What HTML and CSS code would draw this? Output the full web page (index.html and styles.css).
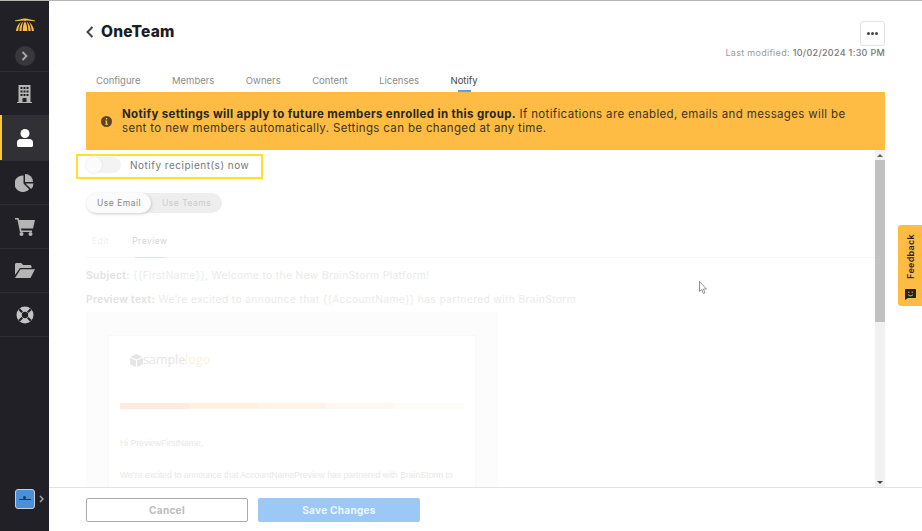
FILE: index.html
```html
<!DOCTYPE html>
<html lang="en">
<head>
  <meta charset="UTF-8" />
  <title>OneTeam - Notify</title>
  <link rel="stylesheet" href="styles.css">
</head>
<body>
  <nav class="sidebar">
    <div class="brand">
      <svg width="20" height="14" viewBox="0 0 20 14"><path fill="#febc45" d="M0 2.400 9 .6h2l9 1.800v.9L11.500 2.600 10 3 8.500 2.600 0 3.300z"/><path fill="#febc45" d="M4.300 13C4.500 8.500 6 5 8.500 3.500 7.200 6 6.600 9.500 6.600 13zM7.700 13C7.800 9 8.400 5.500 10 3.500c1.600 2 2.200 5.500 2.300 9.500zM13.400 13c0-3.500-.6-7-1.900-9.500 2.500 1.500 4 5 4.200 9.500zM1 13c.3-3.500 2-6.800 5-9C4.500 6.500 3.400 10 3.200 13zM16.800 13c-.2-3-1.300-6.500-2.800-9 3 2.200 4.700 5.500 5 9z"/></svg>
      <button class="expand"><svg width="7" height="10" viewBox="0 0 7 10"><path d="M1.500 1 5.500 5 1.500 9" fill="none" stroke="#aaa" stroke-width="1.800"/></svg></button>
    </div>
    <a class="nav-item">
      <svg width="15" height="18" viewBox="0 0 15 18"><path fill="#b5b5b5" fill-rule="evenodd" d="M1.500 0h12v17h-12zM3.500 2v2h2V2zm3 0v2h2V2zm3 0v2h2V2zM3.500 5.500v2h2v-2zm3 0v2h2v-2zm3 0v2h2v-2zM3.500 9v2h2V9zm3 0v2h2V9zm3 0v2h2V9zM5.500 13v4h4v-4z"/><path fill="#b5b5b5" d="M0 17h15v1H0z"/></svg>
    </a>
    <a class="nav-item active">
      <svg width="16" height="18" viewBox="0 0 16 18"><circle cx="8" cy="4.500" r="4.500" fill="#fff"/><path fill="#fff" d="M3.500 10h9c2 0 3.500 1.500 3.500 3.500v3c0 .8-.7 1.500-1.500 1.500h-13C.7 18 0 17.300 0 16.500v-3C0 11.500 1.500 10 3.500 10z"/></svg>
    </a>
    <a class="nav-item">
      <svg width="19" height="18" viewBox="0 0 19 18"><path fill="#b5b5b5" d="M8.500 1.500v8l5.600 5.700A8.300 8.300 0 1 1 8.500 1.500z"/><path fill="#b5b5b5" d="M10 0a8 8 0 0 1 8 8h-8z"/><path fill="#b5b5b5" d="M10.500 9.500h8a8 8 0 0 1-2.400 5.600z"/></svg>
    </a>
    <a class="nav-item">
      <svg width="20" height="18" viewBox="0 0 20 18"><path fill="#b5b5b5" d="M0 0h3.600l.5 2H20l-2 8.500H6l.4 2H17v1.500H5L2.400 1.500H0z"/><circle cx="6.500" cy="16" r="2" fill="#b5b5b5"/><circle cx="15.500" cy="16" r="2" fill="#b5b5b5"/></svg>
    </a>
    <a class="nav-item">
      <svg width="20" height="15" viewBox="0 0 20 15"><path fill="#b5b5b5" d="M0 1.500C0 .7.700 0 1.500 0h4.700l2 2H15c.8 0 1.500.7 1.500 1.500V5H5L0 12z"/><path fill="#b5b5b5" d="M5.500 6.200H20L15.500 15H0z"/></svg>
    </a>
    <a class="nav-item">
      <svg width="18" height="18" viewBox="0 0 18 18"><circle cx="9" cy="9" r="8.500" fill="#c4c4c4"/><circle cx="9" cy="9" r="3.200" fill="#212026"/><path stroke="#212026" stroke-width="2.200" d="M3.200 3.200l3 3M14.800 3.200l-3 3M3.200 14.800l3-3M14.800 14.800l-3-3"/></svg>
    </a>
    <div class="account">
      <span class="account-logo"><b></b><i></i></span>
      <svg width="5" height="8" viewBox="0 0 5 8"><path d="M1 1 4 4 1 7" fill="none" stroke="#aaa" stroke-width="1.400"/></svg>
    </div>
  </nav>

  <div class="main">
    <div class="page">
      <header class="page-head">
        <div class="title-row">
          <svg width="8" height="12" viewBox="0 0 8 12"><path d="M6.500 1 1.500 6l5 5" fill="none" stroke="#444" stroke-width="2"/></svg>
          <h1>OneTeam</h1>
        </div>
        <div class="head-right">
          <button class="more"><i></i><i></i><i></i></button>
          <p class="modified">Last modified: <b>10/02/2024 1:30 PM</b></p>
        </div>
      </header>

      <ul class="tabs">
        <li>Configure</li>
        <li>Members</li>
        <li>Owners</li>
        <li>Content</li>
        <li>Licenses</li>
        <li class="current">Notify</li>
      </ul>

      <div class="banner">
        <svg width="11" height="11" viewBox="0 0 11 11"><circle cx="5.500" cy="5.500" r="5.500" fill="#5a4520"/><path fill="#febc45" d="M4.800 2h1.400v1.400H4.800zM4.300 4.500h1.900v3.200h.6V9H4.300V7.700h.5V5.700h-.5z"/></svg>
        <p><b>Notify settings will apply to future members enrolled in this group.</b> If notifications are enabled, emails and messages will be sent to new members automatically. Settings can be changed at any time.</p>
      </div>

      <div class="scroller">
        <div class="scroll-body">
          <div class="toggle-row">
            <span class="toggle"><i></i></span>
            <span>Notify recipient(s) now</span>
          </div>

          <div class="segment">
            <span class="segment-on">Use Email</span>
            <span>Use Teams</span>
          </div>

          <div class="faded">
            <div class="sub-tabs">
              <span class="sub-off">Edit</span>
              <span class="sub-on">Preview</span>
            </div>
            <p class="meta"><b>Subject:</b> {{FirstName}}, Welcome to the New BrainStorm Platform!</p>
            <p class="meta"><b>Preview text:</b> We’re excited to announce that {{AccountName}} has partnered with BrainStorm</p>
            <div class="mail">
              <div class="mail-card">
                <div class="mail-logo">
                  <svg width="13" height="13" viewBox="0 0 14 14"><path fill="#999" d="M7 0l6.500 3L7 6 .5 3zM0 4l6.500 3v7L0 11zM14 4v7l-6.500 3V7z"/></svg>
                  <span>sample<em>logo</em></span>
                </div>
                <div class="mail-bar"><i></i><i></i><i></i><i></i><i></i></div>
                <p>Hi PreviewFirstName,</p>
                <p>We’re excited to announce that AccountNamePreview has partnered with BrainStorm to</p>
              </div>
            </div>
          </div>
        </div>
        <div class="scrollbar">
          <span class="arrow-up"></span>
          <div class="track"><div class="thumb"></div></div>
          <span class="arrow-down"></span>
        </div>
      </div>
    </div>

    <footer class="actions">
      <button class="btn-cancel">Cancel</button>
      <button class="btn-save">Save Changes</button>
    </footer>
  </div>

  <div class="feedback">
    <span>Feedback</span>
    <svg width="11" height="11" viewBox="0 0 11 11"><path fill="#222" d="M1 0h9c.6 0 1 .4 1 1v7c0 .6-.4 1-1 1H3L0 11V1c0-.6.4-1 1-1z"/><path d="M3.800 2.500v1.500M7.200 2.500v1.500M3 5.500c1 1.800 4 1.800 5 0" stroke="#febc45" stroke-width=".9" fill="none"/></svg>
  </div>

  <svg class="cursor" width="9" height="13" viewBox="0 0 9 13"><path d="M.5.5v10l2.300-2 1.500 4 1.700-.7-1.600-3.800h3.100z" fill="#fff" stroke="#777" stroke-width=".8"/></svg>
</body>
</html>
```

FILE: styles.css
```css
* {
  box-sizing: border-box;
}
html, body {
  height: 100%;
}
body {
  margin: 0;
  display: flex;
  height: 531px;
  overflow: hidden;
  font-family: 'Inter', 'Open Sans', sans-serif;
  color: #333;
  background-color: #fff;
  border-top: 1px solid #b9b4b4;
}
.sidebar {
  width: 49px;
  flex: none;
  display: flex;
  flex-direction: column;
  background-color: #212026;
}
.brand {
  height: 70px;
  flex: none;
  display: flex;
  flex-direction: column;
  align-items: center;
  padding-top: 17px;
  gap: 14px;
}
.expand {
  width: 20px;
  height: 20px;
  padding: 0;
  border: none;
  border-radius: 50%;
  background-color: #38373c;
  display: flex;
  align-items: center;
  justify-content: center;
}
.nav-item {
  height: 44px;
  flex: none;
  display: flex;
  align-items: center;
  justify-content: center;
  border-top: 1px solid #2e2d33;
}
.nav-item:last-of-type {
  border-bottom: 1px solid #2e2d33;
  height: 45px;
}
.nav-item.active {
  height: 45px;
  background-color: #303035;
  border-top: none;
  border-left: 2px solid #fdc92f;
  padding-right: 2px;
}
.account {
  margin-top: auto;
  height: 45px;
  flex: none;
  display: flex;
  align-items: flex-start;
  padding: 3px 0 0 15px;
  gap: 4px;
}
.account svg {
  margin-top: 6px;
}
.account-logo {
  width: 20px;
  height: 20px;
  border: 1px solid #ccc;
  border-radius: 3px;
  background-color: #4a90d9;
  position: relative;
  display: block;
}
.account-logo i {
  position: absolute;
  left: 3px;
  right: 3px;
  top: 9px;
  height: 1px;
  background-color: #1d3a5c;
}
.account-logo b {
  position: absolute;
  left: 7px;
  top: 6px;
  width: 3px;
  height: 3px;
  border-radius: 50%;
  background-color: #1d3a5c;
}
.main {
  flex: 1;
  min-width: 0;
  display: flex;
  flex-direction: column;
}
.page {
  flex: 1;
  min-height: 0;
  padding: 0 37px;
  display: flex;
  flex-direction: column;
}
.page-head {
  height: 67px;
  flex: none;
  display: flex;
  justify-content: space-between;
}
.title-row {
  display: flex;
  align-items: center;
  gap: 7px;
  height: 61px;
}
.title-row h1 {
  margin: 0;
  font-size: 15.500px;
  font-weight: 800;
  letter-spacing: .2px;
  color: #1c1c22;
}
.head-right {
  display: flex;
  flex-direction: column;
  align-items: flex-end;
  padding-top: 20px;
}
.more {
  width: 25px;
  height: 25px;
  padding: 0;
  border: 1px solid #e3e3e3;
  border-radius: 3px;
  background-color: #fff;
  display: flex;
  align-items: center;
  justify-content: center;
  gap: 1px;
}
.more i {
  width: 3px;
  height: 3px;
  border-radius: 50%;
  background-color: #444;
}
.modified {
  margin: 1px 0 0;
  font-size: 9px;
  letter-spacing: .3px;
  color: #999;
}
.modified b {
  font-weight: 500;
  color: #777;
}
.tabs {
  height: 24px;
  flex: none;
  margin: 0;
  padding: 0 10px;
  list-style: none;
  display: flex;
  gap: 31.500px;
  font-size: 9.500px;
  color: #8b8b8b;
}
.tabs li {
  padding-top: 7px;
  position: relative;
}
.tabs .current {
  color: #444;
}
.tabs .current::after {
  content: '';
  position: absolute;
  left: 7px;
  right: 7px;
  bottom: 0;
  height: 2px;
  background-color: #5aa0e6;
}
.banner {
  height: 58px;
  flex: none;
  display: flex;
  align-items: center;
  gap: 10px;
  padding: 0 36px 0 15px;
  background-color: #febc45;
  color: #3d3424;
}
.banner svg {
  flex: none;
}
.banner p {
  margin: 0;
  font-size: 11.500px;
  line-height: 14.500px;
  letter-spacing: .35px;
}
.banner b {
  font-weight: 700;
  color: #2a2620;
}
.scroller {
  flex: 1;
  min-height: 0;
  margin-left: -10px;
  display: flex;
  overflow: hidden;
}
.scroll-body {
  flex: 1;
  min-width: 0;
  padding-left: 10px;
  overflow: hidden;
}
.toggle-row {
  width: 187px;
  height: 25px;
  margin: 4px 0 0 -10px;
  padding: 0 0 3px 8px;
  display: flex;
  align-items: center;
  gap: 9px;
  border: 2px solid #fde225;
  font-size: 10px;
  letter-spacing: .5px;
  color: #777;
}
.toggle {
  width: 35px;
  height: 16px;
  border-radius: 8px;
  background-color: #f3f3f3;
  display: block;
}
.toggle i {
  display: block;
  width: 16px;
  height: 16px;
  border-radius: 50%;
  background-color: #fbfbfb;
  box-shadow: 0 0 2px #ddd;
}
.segment {
  width: 136px;
  height: 20px;
  margin-top: 14px;
  display: flex;
  align-items: center;
  border-radius: 10px;
  background-color: #eee;
  font-size: 8.500px;
  letter-spacing: .5px;
  color: #ccc;
}
.segment span {
  height: 100%;
  padding: 0 11px 1px;
  display: flex;
  align-items: center;
  white-space: nowrap;
}
.segment .segment-on {
  width: 65px;
  flex: none;
  border-radius: 10px;
  background-color: #fbfbfb;
  box-shadow: 1px 1px 3px #ccc;
  color: #888;
}
.faded {
  margin-top: 20px;
}
.sub-tabs {
  height: 25px;
  display: flex;
  font-size: 8.500px;
  letter-spacing: .5px;
  border-bottom: 1px solid #f7f7f7;
  padding-left: 6px;
  gap: 23px;
}
.sub-tabs span {
  padding-top: 3px;
  position: relative;
}
.sub-off {
  color: #f0f0f0;
}
.sub-on {
  color: #d6d6d6;
}
.sub-on::after {
  content: '';
  position: absolute;
  left: 3px;
  right: 2px;
  bottom: -1px;
  height: 1px;
  background-color: #d8e8f8;
}
.meta {
  margin: 11px 0 0;
  font-size: 10.300px;
  line-height: 12px;
  letter-spacing: .35px;
  color: #ebebeb;
  white-space: nowrap;
}
.meta + .meta {
  margin-top: 12px;
}
.meta b {
  color: #e2e2e2;
  font-weight: 600;
}
.mail {
  width: 412px;
  height: 300px;
  margin-top: 7px;
  padding: 23px 22px 0;
  background-color: #fcfcfc;
}
.mail-card {
  height: 100%;
  padding: 0 11px;
  border: 1px solid #f8f8f8;
  background-color: #fff;
  font-family: 'Liberation Sans', sans-serif;
  font-size: 8.600px;
  color: #e8e8e8;
}
.mail-card p {
  margin: 0 0 22px;
  white-space: nowrap;
}
.mail-logo {
  height: 67px;
  padding: 15px 0 0 10px;
  display: flex;
  align-items: flex-start;
  font-family: 'Open Sans', sans-serif;
  font-size: 12.500px;
  color: #e6e6e6;
}
.mail-logo svg {
  opacity: .25;
  margin-top: 3px;
}
.mail-logo em {
  font-style: normal;
  color: #fdf0df;
}
.mail-bar {
  height: 6px;
  margin-bottom: 29px;
  display: flex;
}
.mail-bar i {
  flex: 1;
}
.mail-bar i:nth-child(1) { background-color: #fcebde; }
.mail-bar i:nth-child(2) { background-color: #fdf1e2; }
.mail-bar i:nth-child(3) { background-color: #fdf3e6; }
.mail-bar i:nth-child(4) { background-color: #fef8f0; }
.mail-bar i:nth-child(5) { background-color: #fffcf7; }
.scrollbar {
  width: 10px;
  flex: none;
  display: flex;
  flex-direction: column;
  background-color: #f1f1f1;
}
.track {
  flex: 1;
}
.thumb {
  height: 162px;
  background-color: #c1c1c1;
}
.arrow-up, .arrow-down {
  height: 10px;
  flex: none;
  display: flex;
  align-items: center;
  justify-content: center;
}
.arrow-up::before {
  content: '';
  border: 3px solid transparent;
  border-top: none;
  border-bottom: 3px solid #666;
}
.arrow-down::before {
  content: '';
  border: 3px solid transparent;
  border-bottom: none;
  border-top: 3px solid #444;
}
.actions {
  height: 44px;
  flex: none;
  display: flex;
  gap: 10px;
  padding: 10px 37px 0;
  border-top: 1px solid #e2e2e2;
}
.actions button {
  width: 162px;
  height: 24px;
  border-radius: 2px;
  font-family: inherit;
  font-size: 10px;
  font-weight: 700;
  letter-spacing: .3px;
}
.btn-cancel {
  background-color: #fff;
  border: 1px solid #aaa;
  color: #bbb;
}
.btn-save {
  background-color: #9cc8f6;
  border: none;
  color: #eef6fe;
}
.feedback {
  position: absolute;
  left: 898px;
  top: 225px;
  width: 24px;
  height: 81px;
  padding: 9px 0 6px;
  display: flex;
  flex-direction: column;
  align-items: center;
  justify-content: space-between;
  border-radius: 3px 0 0 3px;
  background-color: #febc45;
}
.feedback span {
  writing-mode: vertical-rl;
  transform: rotate(180deg);
  font-size: 9px;
  font-weight: 600;
  letter-spacing: .3px;
  color: #2a2620;
}
.cursor {
  position: absolute;
  left: 699px;
  top: 281px;
}
```
